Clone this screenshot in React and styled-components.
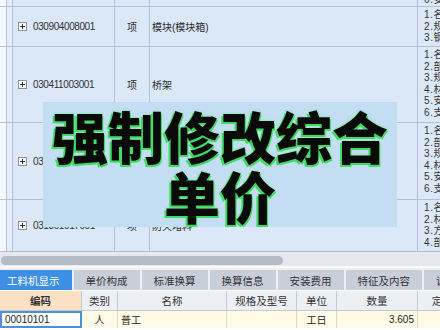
import React from 'react';
import styled, { createGlobalStyle } from 'styled-components';

const GlobalStyle = createGlobalStyle`
	html, body {
		margin: 0;
		padding: 0;
		background: #ffffff;
	}
	* {
		box-sizing: border-box;
	}
`;

const LINE = '#b3c2d3';
const COLS = '7px 6px 102px 35px 268px 1fr';

const Screen = styled.div`
	display: flex;
	flex-direction: column;
	width: 440px;
	height: 330px;
	overflow: hidden;
	font-family: 'Liberation Sans', 'Noto Sans CJK SC', sans-serif;
	color: #2b2b2b;
`;

const ListArea = styled.div`
	position: relative;
	height: 252px;
	overflow: hidden;
	background: #dae8f8;
`;

const Row = styled.div`
	display: grid;
	grid-template-columns: ${COLS};
	height: ${(props) => props.h}px;
	border-bottom: 1px solid ${LINE};
`;

const Strip = styled.div`
	background: ${(props) => (props.inner ? '#e4eefa' : '#f4f8fc')};
	border-right: 1px solid ${LINE};
`;

const Cell = styled.div`
	display: flex;
	align-items: center;
	justify-content: ${(props) => (props.center ? 'center' : 'flex-start')};
	padding-left: ${(props) => (props.center ? 0 : 2)}px;
	border-right: 1px solid ${LINE};
	font-size: 10px;
	white-space: nowrap;
	overflow: hidden;
`;

const Code = styled.span`
	margin-left: 6px;
	font-size: 10px;
	letter-spacing: -0.4px;
	color: #333;
`;

const PlusBox = styled.span`
	display: inline-flex;
	width: 9px;
	height: 9px;
	border: 1px solid #8a9099;
	background: #fafafa;
	margin-left: 3px;
	& > svg {
		display: block;
	}
`;

const Desc = styled.div`
	display: flex;
	flex-direction: column;
	justify-content: ${(props) => (props.end ? 'flex-end' : 'flex-start')};
	padding: 2px 0 0 6px;
	font-size: 10px;
	line-height: 11.6px;
	letter-spacing: 0.6px;
	white-space: nowrap;
	overflow: hidden;
	color: #333;
`;

const Banner = styled.div`
	position: absolute;
	left: 43px;
	top: 102px;
	width: 354px;
	height: 125px;
	display: flex;
	flex-direction: column;
	align-items: center;
	justify-content: center;
	background: #c3ddf3;
	font-family: 'Noto Sans CJK SC', sans-serif;
	font-weight: 900;
	font-size: 56px;
	line-height: 60px;
	color: #0a0a0a;
	text-shadow: -2px 2px 0 #3fdc62, 1px 2px 0 #3fdc62, 0 0 3px #62f07f;
`;

const ScrollTrack = styled.div`
	height: 16px;
	padding: 4px 0 3px 1px;
	background: #e5e8ec;
	border-bottom: 2px solid #fbfbfc;
`;

const ScrollThumb = styled.div`
	width: 282px;
	height: 9px;
	border-radius: 5px;
	background: #b4bbc5;
`;

const TabBar = styled.div`
	display: flex;
	gap: 2px;
	height: 22px;
	padding-top: 2px;
	margin-left: -5px;
	background: #eef0f3;
`;

const Tab = styled.div`
	display: flex;
	align-items: center;
	padding: 0 12px;
	height: 20px;
	font-family: 'Noto Sans CJK SC', sans-serif;
	font-size: 10.5px;
	white-space: nowrap;
	background: ${(props) => (props.active ? '#3d8fe4' : '#c8cfd8')};
	color: ${(props) => (props.active ? '#ffffff' : '#333')};
`;

const GRID_BOTTOM = '82px 36px 109px 70px 40px 81px 60px';

const HeadRow = styled.div`
	display: grid;
	grid-template-columns: ${GRID_BOTTOM};
	height: 20px;
	margin-top: 1px;
	background: #eceff3;
	border-bottom: 1px solid #c3c9d1;
`;

const HeadCell = styled.div`
	display: flex;
	align-items: center;
	justify-content: center;
	font-family: 'Noto Sans CJK SC', sans-serif;
	font-size: 10.5px;
	font-weight: ${(props) => (props.main ? 700 : 400)};
	background: ${(props) => (props.main ? '#fbe0c4' : 'transparent')};
	border-right: 1px solid #c3c9d1;
	color: #333;
	white-space: nowrap;
	overflow: hidden;
`;

const DataRow = styled.div`
	display: grid;
	grid-template-columns: ${GRID_BOTTOM};
	height: 17px;
	background: #fffbe6;
`;

const DataCell = styled.div`
	display: flex;
	align-items: center;
	justify-content: ${(props) => props.align || 'flex-start'};
	padding: 0 3px;
	font-size: 10px;
	border-right: 1px solid #d6d6cc;
	border: ${(props) => (props.selected ? '2px solid #4d8fdb' : undefined)};
	background: ${(props) => (props.selected ? '#ffffff' : 'transparent')};
	color: #222;
	white-space: nowrap;
	overflow: hidden;
`;

const PlusIcon = () => (
	<PlusBox>
		<svg width="7" height="7" viewBox="0 0 7 7">
			<path d="M3.5 1v5M1 3.5h5" stroke="#333" strokeWidth="1" />
		</svg>
	</PlusBox>
);

const items = [
	{ h: 7, code: '', unit: '', name: '', desc: ['6.安装部位'], end: true },
	{
		h: 40,
		code: '030904008001',
		unit: '项',
		name: '模块(模块箱)',
		desc: ['1.名称:模块箱', '2.规格:XX', '3.钢制'],
	},
	{
		h: 76,
		code: '030411003001',
		unit: '项',
		name: '桥架',
		desc: ['1.名称:桥架', '2.部位', '3.规格', '4.材质', '5.安装方式', '6.支架'],
	},
	{
		h: 77,
		code: '030411003002',
		unit: '项',
		name: '桥架',
		desc: ['1.名称:桥架', '2.部位', '3.规格', '4.材质', '5.安装方式', '6.支架'],
	},
	{
		h: 52,
		code: '031301017001',
		unit: '项',
		name: '防火堵料',
		desc: ['1.名称', '2.材质', '3.方式', '4.部位'],
	},
];

const tabs = ['工料机显示', '单价构成', '标准换算', '换算信息', '安装费用', '特征及内容', '说明信息'];

function App() {
	return (
		<Screen>
			<GlobalStyle />

			<ListArea>
				{items.map((item, index) => (
					<Row key={index} h={item.h}>
						<Strip />
						<Strip inner />
						<Cell>
							{item.code && <PlusIcon />}
							<Code>{item.code}</Code>
						</Cell>
						<Cell center>{item.unit}</Cell>
						<Cell>{item.name}</Cell>
						<Desc end={item.end}>
							{item.desc.map((line) => (
								<span key={line}>{line}</span>
							))}
						</Desc>
					</Row>
				))}

				<Banner>
					<span>强制修改综合</span>
					<span>单价</span>
				</Banner>
			</ListArea>

			<ScrollTrack>
				<ScrollThumb />
			</ScrollTrack>

			<TabBar>
				{tabs.map((tab, index) => (
					<Tab key={tab} active={index === 0}>
						{tab}
					</Tab>
				))}
			</TabBar>

			<HeadRow>
				<HeadCell main>编码</HeadCell>
				<HeadCell>类别</HeadCell>
				<HeadCell>名称</HeadCell>
				<HeadCell>规格及型号</HeadCell>
				<HeadCell>单位</HeadCell>
				<HeadCell>数量</HeadCell>
				<HeadCell>定额价</HeadCell>
			</HeadRow>

			<DataRow>
				<DataCell selected>00010101</DataCell>
				<DataCell align="center">人</DataCell>
				<DataCell>普工</DataCell>
				<DataCell />
				<DataCell align="center">工日</DataCell>
				<DataCell align="flex-end">3.605</DataCell>
				<DataCell />
			</DataRow>
		</Screen>
	);
}

export default App;
